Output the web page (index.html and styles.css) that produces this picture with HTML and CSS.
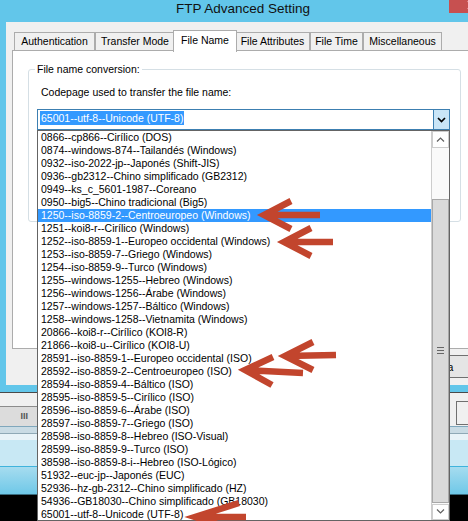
FILE: index.html
```html
<!DOCTYPE html>
<html lang="en">
<head>
  <meta charset="UTF-8">
  <title>FTP Advanced Setting</title>
  <link rel="stylesheet" href="styles.css">
</head>
<body>
  <div class="window">
    <div class="titlebar">
      <span class="title">FTP Advanced Setting</span>
      <span class="close-btn">
        <svg width="10" height="9" viewBox="0 0 10 9"><path d="M1 0L9 8M9 0L1 8" stroke="#fff" stroke-width="1.6"/></svg>
      </span>
    </div>

    <div class="dialog">
      <ul class="tabs">
        <li class="tab">Authentication</li>
        <li class="tab">Transfer Mode</li>
        <li class="tab active">File Name</li>
        <li class="tab">File Attributes</li>
        <li class="tab">File Time</li>
        <li class="tab">Miscellaneous</li>
      </ul>

      <div class="tab-panel">
        <fieldset class="group">
          <legend>File name conversion:</legend>
          <label class="field-label">Codepage used to transfer the file name:</label>

          <!-- combo box, dropped open -->
          <div class="combo">
            <div class="combo-value"><span class="sel-text">65001--utf-8--Unicode (UTF-8)</span></div>
            <div class="combo-btn">
              <svg width="9" height="6" viewBox="0 0 9 6"><polyline points="1,1 4.5,4.5 8,1" fill="none" stroke="#000" stroke-width="1.7"/></svg>
            </div>

            <div class="combo-list">
              <ul class="options">
                <li>0866--cp866--Cirílico (DOS)</li>
                <li>0874--windows-874--Tailandés (Windows)</li>
                <li>0932--iso-2022-jp--Japonés (Shift-JIS)</li>
                <li>0936--gb2312--Chino simplificado (GB2312)</li>
                <li>0949--ks_c_5601-1987--Coreano</li>
                <li>0950--big5--Chino tradicional (Big5)</li>
                <li class="selected">1250--iso-8859-2--Centroeuropeo (Windows)</li>
                <li>1251--koi8-r--Cirílico (Windows)</li>
                <li>1252--iso-8859-1--Europeo occidental (Windows)</li>
                <li>1253--iso-8859-7--Griego (Windows)</li>
                <li>1254--iso-8859-9--Turco (Windows)</li>
                <li>1255--windows-1255--Hebreo (Windows)</li>
                <li>1256--windows-1256--Árabe (Windows)</li>
                <li>1257--windows-1257--Báltico (Windows)</li>
                <li>1258--windows-1258--Vietnamita (Windows)</li>
                <li>20866--koi8-r--Cirílico (KOI8-R)</li>
                <li>21866--koi8-u--Cirílico (KOI8-U)</li>
                <li>28591--iso-8859-1--Europeo occidental (ISO)</li>
                <li>28592--iso-8859-2--Centroeuropeo (ISO)</li>
                <li>28594--iso-8859-4--Báltico (ISO)</li>
                <li>28595--iso-8859-5--Cirílico (ISO)</li>
                <li>28596--iso-8859-6--Árabe (ISO)</li>
                <li>28597--iso-8859-7--Griego (ISO)</li>
                <li>28598--iso-8859-8--Hebreo (ISO-Visual)</li>
                <li>28599--iso-8859-9--Turco (ISO)</li>
                <li>38598--iso-8859-8-i--Hebreo (ISO-Lógico)</li>
                <li>51932--euc-jp--Japonés (EUC)</li>
                <li>52936--hz-gb-2312--Chino simplificado (HZ)</li>
                <li>54936--GB18030--Chino simplificado (GB18030)</li>
                <li>65001--utf-8--Unicode (UTF-8)</li>
              </ul>
              <div class="scrollbar">
                <div class="sb-btn">
                  <svg width="9" height="5" viewBox="0 0 9 5"><polyline points="1,4.5 4.5,1 8,4.5" fill="none" stroke="#606060" stroke-width="1.2"/></svg>
                </div>
                <div class="sb-track">
                  <div class="sb-thumb"><span class="grip"></span></div>
                </div>
                <div class="sb-btn">
                  <svg width="9" height="5" viewBox="0 0 9 5"><polyline points="1,0.5 4.5,4 8,0.5" fill="none" stroke="#606060" stroke-width="1.2"/></svg>
                </div>
              </div>
            </div>
          </div>
        </fieldset>
      </div>

      <div class="dialog-foot">
        <button class="btn">Ayuda</button>
      </div>
    </div>
    <div class="frame-bottom"></div>
  </div>

  <!-- application window behind the dialog -->
  <div class="backdrop">
    <div class="bk-toolbar">
      <div class="hscroll">III</div>
      <div class="bk-btn"></div>
    </div>
    <div class="bk-strip"></div>
    <div class="bk-light"></div>
    <div class="bk-blue"></div>
  </div>

  <!-- red annotation arrows -->
  <svg class="marks" width="468" height="521" viewBox="0 0 468 521">
    <g fill="none" stroke="#c2452d" stroke-width="6.5" stroke-linejoin="miter">
      <path d="M264 215H320M291 201L264 215L291 229"/>
      <path d="M284 242H333M311 228L284 242L311 256"/>
      <path d="M285 356L336 355M313 342L285 356L313 370"/>
      <path d="M245 370L303 373M273 357L245 370L272 385"/>
      <path d="M195 517H246M239 503L195 517L239 531"/>
    </g>
  </svg>
</body>
</html>
```

FILE: styles.css
```css
/* Base */
html, body {
  margin: 0;
  overflow: hidden;
  background: #000;
}
body {
  width: 468px;
  height: 521px;
  position: relative;
  font-family: "Liberation Sans", Arial, sans-serif;
  font-size: 10.5px;
  color: #000;
}
.window {
  width: 495px;
}

/* Title bar */
.titlebar {
  display: flex;
  height: 22px;
  background: #62c6ea;
}
.title {
  margin-left: 171px;
  width: 144px;
  text-align: center;
  font-size: 13.5px;
  line-height: 17px;
  color: #111;
}
.close-btn {
  align-self: flex-start;
  margin-left: auto;
  width: 46px;
  height: 13px;
  background: #c75050;
  display: flex;
  justify-content: center;
  padding-top: 1px;
  box-sizing: border-box;
}

/* Dialog body */
.dialog {
  background: #f0f0f0;
  border-left: 6px solid #62c6ea;
  padding-top: 8px;
}
.tabs {
  display: flex;
  align-items: flex-end;
  height: 20px;
  margin: 0 0 0 8px;
  padding: 0;
  list-style: none;
}
.tab {
  box-sizing: border-box;
  height: 18px;
  border: 1px solid #acacac;
  border-bottom: 0;
  background: #f0f0f0;
  line-height: 17px;
  text-align: center;
  white-space: nowrap;
}
.tab:nth-child(1) { width: 81px; }
.tab:nth-child(2) { width: 80px; }
.tab:nth-child(4) { width: 75px; }
.tab:nth-child(5) { width: 53px; }
.tab:nth-child(6) { width: 79px; }
.tab.active {
  position: relative;
  z-index: 1;
  width: 64px;
  height: 22px;
  margin: 0 -2px -2px;
  background: #fff;
  line-height: 19px;
}

.tab-panel {
  box-sizing: border-box;
  height: 299px;
  margin-left: 6px;
  border: 1px solid #acacac;
  background: #fff;
}

/* Group box */
.group {
  box-sizing: border-box;
  width: 433px;
  height: 159px;
  margin: 12px 0 0 15px;
  padding: 0;
  border: 1px solid #d5dfe5;
  border-radius: 3px;
}
.group legend {
  margin-left: 6px;
  padding: 0 2px;
  line-height: 13px;
}
.field-label {
  display: block;
  margin: 10px 0 0 12px;
  line-height: 13px;
}

/* Combo box */
.combo {
  position: relative;
  display: flex;
  box-sizing: border-box;
  width: 413px;
  height: 21px;
  margin: 10px 0 0 8px;
  border: 1px solid #3c7fb1;
  background: #fff;
}
.combo-value {
  flex: 1;
  padding: 1px 2px;
}
.sel-text {
  display: inline-block;
  padding: 0 1px;
  line-height: 14px;
  background: #3399ff;
  color: #fff;
}
.combo-btn {
  box-sizing: border-box;
  width: 16px;
  border-left: 1px solid #3c7fb1;
  background: #c9e5f7;
  display: flex;
  align-items: center;
  justify-content: center;
}

/* Dropped list */
.combo-list {
  position: absolute;
  z-index: 10;
  top: calc(100% + 1px);
  left: -1px;
  right: -1px;
  box-sizing: border-box;
  height: 391px;
  border: 1px solid #646464;
  background: #fff;
  display: flex;
}
.options {
  flex: 1;
  margin: 0;
  padding: 0;
  list-style: none;
  overflow: hidden;
}
.options li {
  height: 13px;
  line-height: 13px;
  padding-left: 3px;
  white-space: nowrap;
  overflow: hidden;
}
.options li.selected {
  background: #3399ff;
  color: #fff;
}

.scrollbar {
  width: 17px;
  display: flex;
  flex-direction: column;
  background: #fafafa;
  border-left: 1px solid #cdcdcd;
}
.sb-btn {
  box-sizing: border-box;
  height: 17px;
  border: 1px solid #cdcdcd;
  background: #fff;
  display: flex;
  align-items: center;
  justify-content: center;
}
.sb-track {
  flex: 1;
  padding: 51px 0 1px;
}
.sb-thumb {
  box-sizing: border-box;
  height: 304px;
  border: 1px solid #a8a8a8;
  background: #dadada;
  display: flex;
  align-items: center;
  justify-content: center;
}
.grip {
  width: 7px;
  height: 5px;
  border-top: 1px solid #666;
  border-bottom: 1px solid #666;
  background: linear-gradient(#dadada 2px, #666 2px, #666 3px, #dadada 3px);
}

/* Button row under the tabs */
.dialog-foot {
  height: 36px;
  display: flex;
  justify-content: flex-end;
  padding-right: 19px;
}
.btn {
  width: 75px;
  height: 23px;
  margin-top: 6px;
  border: 1px solid #707070;
  background: #e5e5e5;
  font: inherit;
  color: #000;
  padding: 0;
}
.frame-bottom {
  height: 7px;
  background: #62c6ea;
  border-bottom: 1px solid #4a4a4a;
}

/* Background application */
.bk-toolbar {
  display: flex;
  align-items: flex-end;
  height: 33px;
  background: #f0f0f0;
}
.hscroll {
  box-sizing: border-box;
  width: 40px;
  height: 20px;
  padding-right: 12px;
  border-top: 1px solid #8c8c8c;
  background: #dcdcdc;
  color: #555;
  font-weight: bold;
  font-size: 9px;
  line-height: 19px;
  text-align: right;
}
.bk-btn {
  box-sizing: border-box;
  width: 32px;
  height: 24px;
  margin: 0 -20px 1px auto;
  border: 1px solid #707070;
}
.bk-strip {
  height: 13px;
  border-top: 1px solid #7fa7bc;
  background: linear-gradient(#c9dbe4 0, #c9dbe4 6px, #8fa9b6 6px, #8fa9b6 7px, #e8f3f8 7px);
}
.bk-light {
  height: 26px;
  background: #c8e8f4;
  border-bottom: 1px solid #3fb3dc;
}
.bk-blue {
  height: 27px;
  background: linear-gradient(#a6dcef, #6fc8e8);
  border-bottom: 1px solid #3a6d80;
}

/* Annotation overlay */
.marks {
  position: absolute;
  top: 0;
  left: 0;
  z-index: 20;
}
```
